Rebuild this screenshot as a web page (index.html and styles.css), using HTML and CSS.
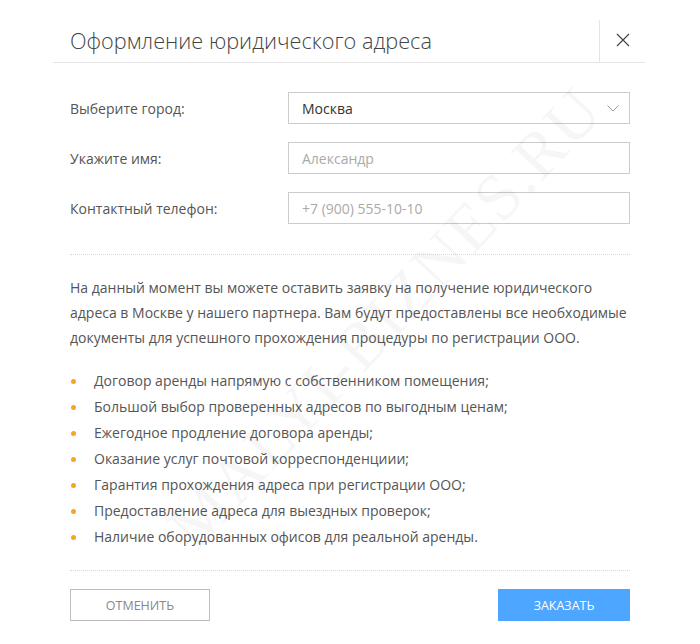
FILE: index.html
```html
<!DOCTYPE html>
<html>

<head>
    <title>Оформление юридического адреса</title>
    <link rel="stylesheet" href="styles.css">
</head>

<body>
    <div class="modal">
        <div class="modal-header">
            <h1 class="modal-title">Оформление юридического адреса</h1>
            <button class="modal-close" aria-label="Закрыть">
                <svg width="14" height="14" viewBox="0 0 14 14">
                    <path d="M1 1 L13 13 M13 1 L1 13" stroke="#444" stroke-width="1.2" fill="none" />
                </svg>
            </button>
        </div>

        <div class="modal-body">
            <div class="form">
                <div class="form-row">
                    <label class="form-label">Выберите город:</label>
                    <div class="select">
                        <span class="select-value">Москва</span>
                        <svg class="select-arrow" width="12" height="7" viewBox="0 0 12 7">
                            <path d="M0.5 0.5 L6 6 L11.5 0.5" stroke="#999" stroke-width="1" fill="none" />
                        </svg>
                    </div>
                </div>
                <div class="form-row">
                    <label class="form-label">Укажите имя:</label>
                    <input class="input" type="text" placeholder="Александр">
                </div>
                <div class="form-row">
                    <label class="form-label">Контактный телефон:</label>
                    <input class="input" type="text" placeholder="+7 (900) 555-10-10">
                </div>
            </div>

            <div class="divider"></div>

            <p class="info">На данный момент вы можете оставить заявку на получение юридического адреса в Москве у нашего партнера. Вам будут предоставлены все необходимые документы для успешного прохождения процедуры по регистрации ООО.</p>

            <ul class="benefits">
                <li>Договор аренды напрямую с собственником помещения;</li>
                <li>Большой выбор проверенных адресов по выгодным ценам;</li>
                <li>Ежегодное продление договора аренды;</li>
                <li>Оказание услуг почтовой корреспонденциии;</li>
                <li>Гарантия прохождения адреса при регистрации ООО;</li>
                <li>Предоставление адреса для выездных проверок;</li>
                <li>Наличие оборудованных офисов для реальной аренды.</li>
            </ul>

            <div class="divider"></div>

            <div class="actions">
                <button class="btn btn-cancel">Отменить</button>
                <button class="btn btn-order">Заказать</button>
            </div>
        </div>

        <div class="watermark">MALYI-BIZNES.RU</div>
    </div>
</body>

</html>
```

FILE: styles.css
```css
body {
    margin: 0;
    background-color: #fff;
    font-family: "Open Sans", Arial, sans-serif;
    color: #555;
}

.modal {
    position: relative;
    width: 700px;
    height: 644px;
    overflow: hidden;
    background-color: #fff;
}

.modal-header {
    display: flex;
    align-items: stretch;
    margin: 0 55px 0 53px;
    padding-top: 20px;
    border-bottom: 1px solid #e5e5e5;
}

.modal-title {
    flex: 1;
    margin: 0;
    padding: 0 0 0 17px;
    font-size: 21.7px;
    font-weight: 300;
    line-height: 42px;
    color: #444;
}

.modal-close {
    width: 46px;
    border: none;
    border-left: 1px solid #e5e5e5;
    background: none;
    padding: 0 0 2px 0;
    display: flex;
    align-items: center;
    justify-content: center;
    cursor: pointer;
}

.modal-body {
    padding: 29px 70px 0 70px;
}

.form {
    display: flex;
    flex-direction: column;
    gap: 18px;
}

.form-row {
    display: flex;
    align-items: center;
}

.form-label {
    width: 218px;
    font-size: 14px;
    color: #555;
}

.select,
.input {
    flex: 1;
    box-sizing: border-box;
    height: 32px;
    border: 1px solid #ccc;
    font-family: "Open Sans", Arial, sans-serif;
    font-size: 14px;
    padding: 0 13px;
}

.select {
    display: flex;
    align-items: center;
    justify-content: space-between;
    color: #333;
}

.select-arrow {
    margin-right: -3px;
}

.input {
    outline: none;
    color: #333;
}

.input::placeholder {
    color: #aaa;
}

.divider {
    border-top: 1px dotted #d8d8d8;
    margin-top: 30px;
}

.info {
    margin: 20px 0 0 0;
    font-size: 14px;
    line-height: 25px;
    color: #555;
}

.benefits {
    list-style: none;
    margin: 18px 0 0 0;
    padding: 0;
}

.benefits li {
    position: relative;
    padding-left: 24px;
    font-size: 14px;
    line-height: 26px;
    color: #555;
}

.benefits li::before {
    content: "";
    position: absolute;
    left: 1px;
    top: 11px;
    width: 5px;
    height: 5px;
    border-radius: 50%;
    background-color: #f5a623;
}

.benefits + .divider {
    margin-top: 20px;
}

.actions {
    display: flex;
    justify-content: space-between;
    margin-top: 18px;
}

.btn {
    height: 32px;
    font-family: "Open Sans", Arial, sans-serif;
    font-size: 12.5px;
    text-transform: uppercase;
    cursor: pointer;
}

.btn-cancel {
    width: 140px;
    background-color: #fff;
    border: 1px solid #bbb;
    color: #888;
}

.btn-order {
    width: 132px;
    background-color: #4da6ff;
    border: none;
    color: #fff;
}

.watermark {
    position: absolute;
    left: 75px;
    top: 280px;
    width: 620px;
    text-align: center;
    font-family: "Liberation Serif", serif;
    font-size: 66px;
    letter-spacing: 2px;
    color: rgba(0, 0, 0, 0.035);
    transform: rotate(-47deg);
    pointer-events: none;
}
```
